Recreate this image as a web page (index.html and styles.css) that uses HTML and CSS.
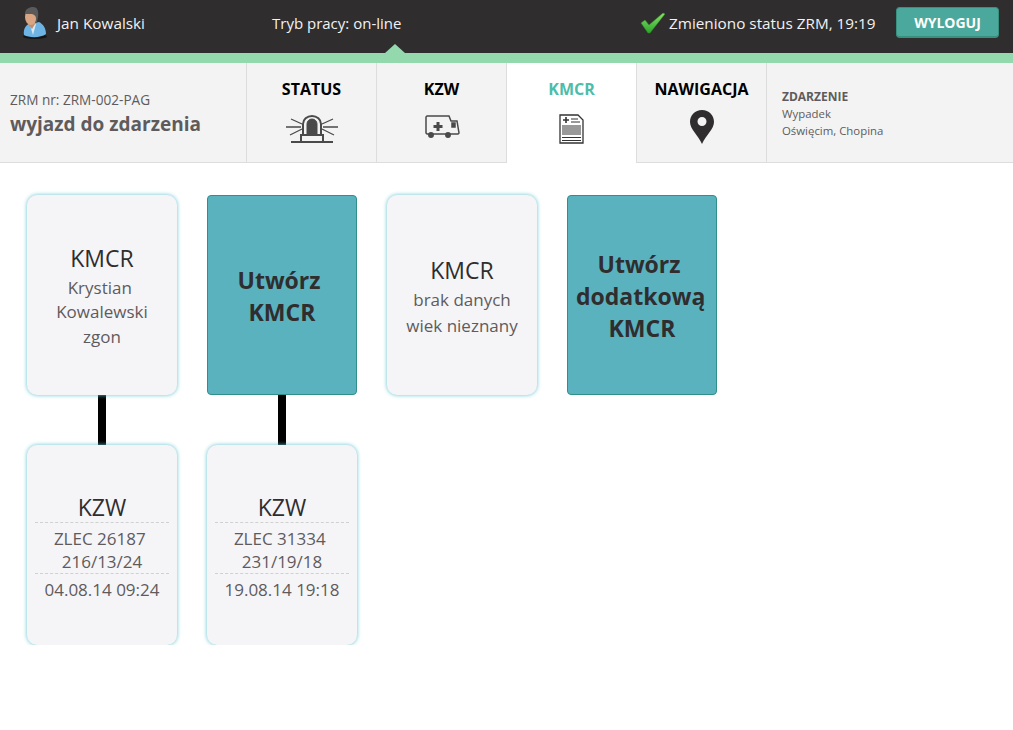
FILE: index.html
```html
<!DOCTYPE html>
<html lang="pl">
<head>
  <meta charset="UTF-8" />
  <title>KMCR</title>
  <link rel="stylesheet" href="styles.css">
</head>
<body>
  <header class="top-bar">
    <div class="user">
      <svg class="user-icon" width="28" height="34" viewBox="0 0 28 34">
        <ellipse cx="14" cy="30.500" rx="12" ry="2.500" fill="#161515"/>
        <path d="M3 29c-1-6 2-10 6-12h5l4-1c4 2 7 6 7 12-5 4-17 4-22 1z" fill="#6db4e4"/>
        <path d="M9 19l3 10 3-11z" fill="#d5e9f6"/>
        <path d="M7 14h7v4l-3 5-4-5z" fill="#c08e6c"/>
        <ellipse cx="10" cy="11" rx="6" ry="8" fill="#d9a582"/>
        <path d="M4 8c0-5 4-7 8-7 4 0 6 3 5 10l-1 5-2 1c2-5 1-8-3-9-3 0-5 0-7 0z" fill="#5a5a5a"/>
      </svg>
      <span>Jan Kowalski</span>
    </div>
    <div class="mode">Tryb pracy: on-line</div>
    <div class="status">
      <svg width="26" height="22" viewBox="0 0 26 22">
        <defs>
          <linearGradient id="checkFill" x1="0" y1="0" x2="0" y2="1">
            <stop offset="0" stop-color="#8be06a"/>
            <stop offset="1" stop-color="#2aa52a"/>
          </linearGradient>
        </defs>
        <path d="M1 11l4-3 4 5L23 1l2 1L10 21H8z" fill="url(#checkFill)" stroke="#2a8f22" stroke-width=".5"/>
      </svg>
      <span>Zmieniono status ZRM, 19:19</span>
    </div>
    <button class="logout">WYLOGUJ</button>
  </header>
  <div class="green-line"></div>

  <nav class="tabs">
    <div class="zrm">
      <div class="zrm-nr">ZRM nr: ZRM-002-PAG</div>
      <div class="zrm-state">wyjazd do zdarzenia</div>
    </div>
    <div class="tab">
      <div class="tab-name">STATUS</div>
      <svg class="icon-siren" width="52" height="28" viewBox="0 0 52 28" fill="none" stroke="#4a4a4a">
        <path d="M17 20V9a9 8 0 0 1 18 0v11" stroke-width="2"/>
        <path d="M21 19V9a5 5 0 0 1 10 0v10z" fill="#4a4a4a"/>
        <path d="M15 27v-7h22v7" stroke-width="2"/>
        <path d="M5 27h42" stroke-width="2"/>
        <path d="M0 12h15M5 4l11 5M4 20l12-6M37 12h15M47 4l-11 5M48 20l-12-6" stroke-width="1.300"/>
      </svg>
    </div>
    <div class="tab">
      <div class="tab-name">KZW</div>
      <svg class="icon-ambulance" width="35" height="23" viewBox="0 0 35 23" fill="none" stroke="#4a4a4a" stroke-width="1.500">
        <path d="M2 1h22l2 5h6l2 12-1 1H2l-1-1V2z"/>
        <path d="M13 7v9M8.500 11.500h9" stroke-width="3"/>
        <path d="M27 8h3v4h-3z" fill="#4a4a4a"/>
        <circle cx="6" cy="20" r="2.200" fill="#4a4a4a"/>
        <circle cx="23" cy="20" r="2.200" fill="#4a4a4a"/>
      </svg>
    </div>
    <div class="tab tab-active">
      <div class="tab-name">KMCR</div>
      <svg class="icon-doc" width="25" height="30" viewBox="0 0 25 30" fill="none" stroke="#333">
        <path d="M1 1h18l5 5v23H1z" fill="#fff" stroke-width="1.300"/>
        <path d="M7 3v6M4 6h6" stroke-width="1.600"/>
        <path d="M12 5h7M12 8h9" stroke-width="1.200"/>
        <path d="M3 12h19M3 14h19M3 16h19M3 18h19M3 20h19M3 23.500h19M3 26.500h19" stroke-width="1"/>
      </svg>
    </div>
    <div class="tab">
      <div class="tab-name">NAWIGACJA</div>
      <svg class="icon-pin" width="24" height="34" viewBox="0 0 24 34">
        <path fill-rule="evenodd" d="M12 0C5 0 0 5 0 12c0 7 8 13 12 22 4-9 12-15 12-22C24 5 19 0 12 0zm0 7a4.500 4.500 0 1 1 0 9 4.500 4.500 0 0 1 0-9z" fill="#2f2d2e"/>
      </svg>
    </div>
    <div class="event">
      <div class="event-title">ZDARZENIE</div>
      <div>Wypadek</div>
      <div>Oświęcim, Chopina</div>
    </div>
  </nav>

  <main class="board">
    <div class="column">
      <div class="card">
        <div class="card-title">KMCR</div>
        <div class="card-name">Krystian&nbsp; Kowalewski</div>
        <div class="card-line">zgon</div>
      </div>
      <div class="link"></div>
      <div class="card card-kzw">
        <div class="card-title">KZW</div>
        <div class="card-sep">ZLEC 26187&nbsp;<br>216/13/24</div>
        <div class="card-sep">04.08.14 09:24</div>
      </div>
    </div>
    <div class="column">
      <div class="card card-add">Utwórz&nbsp;<br>KMCR</div>
      <div class="link"></div>
      <div class="card card-kzw">
        <div class="card-title">KZW</div>
        <div class="card-sep">ZLEC 31334&nbsp;<br>231/19/18</div>
        <div class="card-sep">19.08.14 19:18</div>
      </div>
    </div>
    <div class="column">
      <div class="card">
        <div class="card-title">KMCR</div>
        <div class="card-line">brak danych</div>
        <div class="card-line">wiek nieznany</div>
      </div>
    </div>
    <div class="column">
      <div class="card card-add">Utwórz&nbsp;<br>dodatkową&nbsp;<br>KMCR</div>
    </div>
  </main>
</body>
</html>
```

FILE: styles.css
```css
body {
  margin: 0;
  font-family: "Open Sans", Arial, sans-serif;
  background-color: #ffffff;
  color: #5f5b5c;
}

.top-bar {
  height: 53px;
  background-color: #2f2d2e;
  color: #f2f2f2;
  font-size: 15.3px;
  display: flex;
  align-items: center;
  padding: 0 14px 8px 21px;
  box-sizing: border-box;
  position: relative;
}

.top-bar::after {
  content: "";
  position: absolute;
  left: 385px;
  bottom: 0;
  border-left: 10px solid transparent;
  border-right: 10px solid transparent;
  border-bottom: 9px solid #94d9ae;
}

.user {
  display: flex;
  align-items: center;
  gap: 8px;
  width: 251px;
}

.mode {
  width: 368px;
  font-size: 15px;
}

.status {
  display: flex;
  align-items: center;
  gap: 3px;
  width: 256px;
}

.logout {
  width: 103px;
  height: 31px;
  background-color: #4aa99c;
  border: 1px solid #39907f;
  border-bottom-width: 2px;
  border-radius: 4px;
  color: #ffffff;
  font-family: inherit;
  font-weight: bold;
  font-size: 14px;
  padding: 0;
}

.green-line {
  height: 10px;
  background-color: #94d9ae;
}

.tabs {
  display: flex;
  height: 100px;
  box-sizing: border-box;
  background-color: #f3f3f3;
  border-bottom: 1px solid #dddddd;
}

.zrm {
  width: 236px;
  padding: 27px 0 0 10px;
  border-right: 1px solid #dddddd;
}

.zrm-nr {
  font-size: 13.6px;
  line-height: 20px;
}

.zrm-state {
  font-size: 19px;
  font-weight: bold;
  line-height: 28px;
}

.tab {
  width: 130px;
  height: 100px;
  box-sizing: border-box;
  border-right: 1px solid #dddddd;
  padding-top: 16px;
  display: flex;
  flex-direction: column;
  align-items: center;
  flex-shrink: 0;
}

.tab-name {
  font-size: 16px;
  font-weight: bold;
  color: #000000;
  line-height: 20px;
}

.tab-active {
  background-color: #ffffff;
}

.tab-active .tab-name {
  color: #4dbdaa;
}

.icon-siren {
  margin-top: 16px;
}

.icon-ambulance {
  margin: 16px 0 0 2px;
}

.icon-doc {
  margin-top: 15px;
}

.icon-pin {
  margin-top: 11px;
}

.event {
  padding: 25px 0 0 15px;
  font-size: 11.4px;
  line-height: 17px;
}

.event-title {
  font-weight: bold;
  font-size: 12px;
}

.board {
  display: flex;
  gap: 30px;
  padding: 32px 0 0 27px;
}

.column {
  display: flex;
  flex-direction: column;
  align-items: center;
  width: 150px;
}

.card {
  width: 150px;
  height: 200px;
  box-sizing: border-box;
  padding: 2px 8px 0;
  background-color: #f5f5f8;
  border-radius: 10px;
  box-shadow: 0 0 4px #62c2cf;
  display: flex;
  flex-direction: column;
  justify-content: center;
  text-align: center;
  font-size: 17px;
  position: relative;
}

.card-title {
  font-size: 23px;
  line-height: 32px;
  margin-bottom: 1px;
  color: #2f2d2e;
}

.card-line {
  line-height: 26px;
}

.card-name {
  margin-top: 1px;
  line-height: 24px;
}

.card-kzw .card-title {
  line-height: 30px;
  margin-bottom: 0;
}

.card-sep {
  border-top: 1px dashed #d0d0d0;
  padding-top: 4px;
  line-height: 23px;
}

.card-add {
  background-color: #5ab2be;
  border: 1px solid #2f8f8a;
  border-radius: 4px;
  box-shadow: none;
  font-size: 23px;
  font-weight: bold;
  line-height: 32px;
  color: #2f2d2e;
}

.link {
  width: 8px;
  height: 50px;
  background-color: #000000;
}
```
